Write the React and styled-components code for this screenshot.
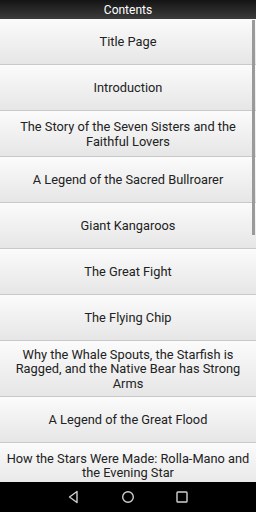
import React from "react";
import styled, { createGlobalStyle } from "styled-components";

const Global = createGlobalStyle`
  html, body { margin: 0; padding: 0; background: #000; }
  body { font-family: Roboto, "Noto Sans", "Liberation Sans", sans-serif; }
`;

const Screen = styled.div`
  width: 256px;
  height: 512px;
  display: flex;
  flex-direction: column;
  background: #f4f4f4;
  overflow: hidden;
`;

const Header = styled.div`
  height: 19px;
  flex: none;
  display: flex;
  align-items: center;
  justify-content: center;
  background: linear-gradient(#141414, #3c3c3c);
  color: #fff;
  font-size: 12px;
  font-weight: 400;
`;

const List = styled.div`
  position: relative;
  flex: 1;
  overflow: hidden;
  display: flex;
  flex-direction: column;
`;

const Row = styled.div`
  flex: none;
  min-height: 46px;
  box-sizing: border-box;
  padding: 7px 6px 5px;
  display: flex;
  align-items: center;
  justify-content: center;
  text-align: center;
  font-size: 12.8px;
  line-height: 14.3px;
  color: #222;
  background: linear-gradient(#fbfbfb, #e6e6e6);
  border-bottom: 1px solid #c9c9c9;
`;

const Scrollbar = styled.div`
  position: absolute;
  right: 1px;
  top: 1px;
  width: 3px;
  height: 215px;
  background: #9a9a9a;
`;

const NavBar = styled.div`
  height: 30px;
  flex: none;
  background: #000;
  display: flex;
  align-items: center;
  justify-content: center;
  gap: 38px;
`;

const NavIcon = styled.svg`
  width: 16px;
  height: 16px;
  display: block;
`;

const items = [
  "Title Page",
  "Introduction",
  "The Story of the Seven Sisters and the Faithful Lovers",
  "A Legend of the Sacred Bullroarer",
  "Giant Kangaroos",
  "The Great Fight",
  "The Flying Chip",
  "Why the Whale Spouts, the Starfish is Ragged, and the Native Bear has Strong Arms",
  "A Legend of the Great Flood",
  "How the Stars Were Made: Rolla-Mano and the Evening Star",
];

export default function App() {
  return (
    <Screen>
      <Global />
      <Header>Contents</Header>
      <List>
        {items.map((t) => (
          <Row key={t}>{t}</Row>
        ))}
        <Scrollbar />
      </List>
      <NavBar>
        <NavIcon viewBox="0 0 16 16">
          <path d="M11 2.5 L3.5 8 L11 13.5 Z" fill="none" stroke="#d0d0d0" strokeWidth="1.4" strokeLinejoin="round" />
        </NavIcon>
        <NavIcon viewBox="0 0 16 16">
          <circle cx="8" cy="8" r="5.3" fill="none" stroke="#d0d0d0" strokeWidth="1.4" />
        </NavIcon>
        <NavIcon viewBox="0 0 16 16">
          <rect x="3" y="3" width="10" height="10" rx="0.8" fill="none" stroke="#d0d0d0" strokeWidth="1.4" />
        </NavIcon>
      </NavBar>
    </Screen>
  );
}
